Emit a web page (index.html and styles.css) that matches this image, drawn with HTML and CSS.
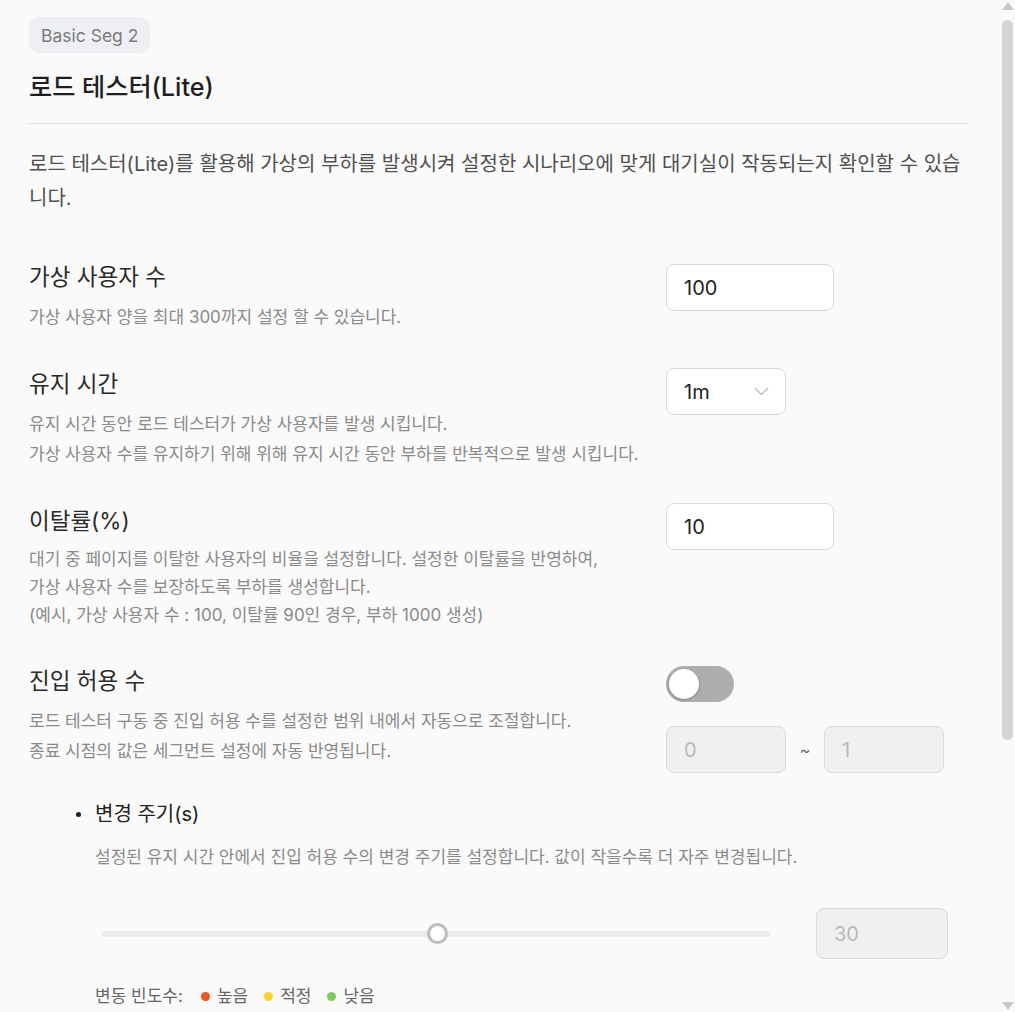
FILE: index.html
```html
<!DOCTYPE html>
<html lang="ko">
<head>
<meta charset="utf-8">
<title>로드 테스터(Lite)</title>
<link rel="stylesheet" href="styles.css">
</head>
<body>
<main class="page">
  <span class="badge">Basic Seg 2</span>
  <h1 class="title">로드 테스터(Lite)</h1>
  <hr class="divider">
  <p class="intro">로드 테스터(Lite)를 활용해 가상의 부하를 발생시켜 설정한 시나리오에 맞게 대기실이 작동되는지 확인할 수 있습니다.</p>

  <section class="rows">
    <div class="row">
      <div class="info">
        <h2 class="label">가상 사용자 수</h2>
        <p class="desc">가상 사용자 양을 최대 300까지 설정 할 수 있습니다.</p>
      </div>
      <div class="control">
        <div class="field field-wide">100</div>
      </div>
    </div>

    <div class="row">
      <div class="info">
        <h2 class="label">유지 시간</h2>
        <p class="desc">유지 시간 동안 로드 테스터가 가상 사용자를 발생 시킵니다.<br>가상 사용자 수를 유지하기 위해 위해 유지 시간 동안 부하를 반복적으로 발생 시킵니다.</p>
      </div>
      <div class="control control-r2">
        <div class="field field-select">
          <span>1m</span>
          <svg class="chevron" width="15" height="9" viewBox="0 0 15 9"><path d="M1 1 L7.5 7.5 L14 1" fill="none" stroke="#bdbdbd" stroke-width="1.3"/></svg>
        </div>
      </div>
    </div>

    <div class="row">
      <div class="info">
        <h2 class="label">이탈률(%)</h2>
        <p class="desc desc-tight">대기 중 페이지를 이탈한 사용자의 비율을 설정합니다. 설정한 이탈률을 반영하여,<br>가상 사용자 수를 보장하도록 부하를 생성합니다.<br>(예시, 가상 사용자 수 : 100, 이탈률 90인 경우, 부하 1000 생성)</p>
      </div>
      <div class="control control-r3">
        <div class="field field-wide">10</div>
      </div>
    </div>

    <div class="row">
      <div class="info">
        <h2 class="label">진입 허용 수</h2>
        <p class="desc">로드 테스터 구동 중 진입 허용 수를 설정한 범위 내에서 자동으로 조절합니다.<br>종료 시점의 값은 세그먼트 설정에 자동 반영됩니다.</p>
      </div>
      <div class="control control-stack">
        <div class="toggle"><span class="knob"></span></div>
        <div class="range">
          <div class="field field-disabled">0</div>
          <span class="tilde">~</span>
          <div class="field field-disabled">1</div>
        </div>
      </div>
    </div>
  </section>

  <section class="sub">
    <div class="sub-head"><span class="dot-bullet"></span><h3 class="sub-label">변경 주기(s)</h3></div>
    <p class="sub-desc">설정된 유지 시간 안에서 진입 허용 수의 변경 주기를 설정합니다. 값이 작을수록 더 자주 변경됩니다.</p>
    <div class="slider-row">
      <div class="slider">
        <div class="track">
          <span class="thumb"></span>
        </div>
      </div>
      <div class="field field-disabled field-num">30</div>
    </div>
    <div class="legend">
      <span class="legend-title">변동 빈도수:</span>
      <span class="legend-item"><span class="ldot ldot-high"></span>높음</span>
      <span class="legend-item"><span class="ldot ldot-mid"></span>적정</span>
      <span class="legend-item"><span class="ldot ldot-low"></span>낮음</span>
    </div>
  </section>
</main>
<div class="scrollbar" aria-hidden="true">
  <span class="sb-arrow sb-up"></span>
  <span class="sb-thumb"></span>
  <span class="sb-arrow sb-down"></span>
</div>
</body>
</html>
```

FILE: styles.css
```css
* { box-sizing: border-box; }
html, body { margin: 0; padding: 0; }
html { scrollbar-width: none; }
body {
  background: #fafafa;
  font-family: Inter, "Noto Sans CJK KR", sans-serif;
  color: #222;
}
.page {
  padding: 17px 48px 380px 29px;
  display: flex;
  flex-direction: column;
  align-items: flex-start;
}
.badge {
  display: inline-flex;
  align-items: center;
  height: 36px;
  padding: 0 12px;
  background: #eeeff3;
  border-radius: 10px;
  font-size: 17.5px;
  color: #7b7b7b;
}
.title {
  margin: 18px 0 0;
  font-size: 25.2px;
  line-height: 32px;
  font-weight: 500;
  color: #1f1f1f;
}
.divider {
  align-self: stretch;
  border: 0;
  border-top: 1px solid #dcdcdc;
  margin: 20px 0 0;
}
.intro {
  margin: 23px 0 0;
  font-size: 20px;
  line-height: 34px;
  color: #505050;
}
.rows {
  align-self: stretch;
  margin-top: 47px;
  display: flex;
  flex-direction: column;
  gap: 37px;
}
.row {
  display: grid;
  grid-template-columns: 637px 1fr;
}
.label {
  margin: 0;
  font-size: 22.5px;
  line-height: 30px;
  font-weight: 400;
  color: #2a2a2a;
}
.desc {
  margin: 10px 0 0;
  font-size: 17px;
  line-height: 30px;
  color: #8a8a8a;
}
.desc-tight { line-height: 28px; margin-top: 9px; }
.control { padding-top: 2px; }
.control-r2 { padding-top: 0; margin-top: -1px; }
.control-r3 { padding-top: 0; margin-top: -3px; }
.control-stack {
  padding-top: 0;
  display: flex;
  flex-direction: column;
  gap: 24px;
}
.field {
  height: 47px;
  border: 1px solid #dadada;
  border-radius: 8px;
  background: #fff;
  font-size: 20px;
  color: #222;
  display: flex;
  align-items: center;
  padding: 0 17px;
}
.field-wide { width: 168px; }
.field-select {
  width: 120px;
  justify-content: space-between;
  padding-right: 16px;
}
.chevron { display: block; }
.field-disabled {
  width: 120px;
  background: #f0f0f0;
  color: #b9b9b9;
}
.range {
  display: flex;
  align-items: center;
}
.tilde {
  width: 38px;
  text-align: center;
  color: #666;
  font-size: 16px;
}
.toggle {
  width: 68px;
  height: 36px;
  border-radius: 18px;
  background: #adaeb0;
  display: flex;
  align-items: center;
  padding-left: 3px;
}
.knob {
  width: 30px;
  height: 30px;
  border-radius: 50%;
  background: #fff;
  box-shadow: 0 1px 3px rgba(0,0,0,0.25);
}
.sub {
  align-self: stretch;
  margin-top: 27px;
  padding-left: 47px;
}
.sub-head {
  display: flex;
  align-items: center;
  gap: 14px;
}
.dot-bullet {
  width: 5px;
  height: 5px;
  border-radius: 50%;
  background: #222;
}
.sub-label {
  margin: 0;
  font-size: 20px;
  line-height: 28px;
  font-weight: 400;
  color: #222;
}
.sub-desc {
  margin: 14px 0 0 19px;
  font-size: 17px;
  line-height: 30px;
  color: #8a8a8a;
}
.slider-row {
  margin: 36px 0 0 19px;
  width: 853px;
  display: flex;
  align-items: center;
  gap: 46px;
}
.slider {
  flex: 1;
  padding-left: 7px;
}
.track {
  height: 6px;
  border-radius: 3px;
  background: #ebebeb;
  display: flex;
  align-items: center;
  padding-left: 325px;
}
.thumb {
  width: 21px;
  height: 21px;
  border-radius: 50%;
  background: #fff;
  border: 3px solid #bdbdbd;
}
.field-num {
  width: 132px;
  height: 51px;
  font-size: 20px;
}
.legend {
  margin: 25px 0 0 19px;
  display: flex;
  align-items: center;
  font-size: 17px;
  line-height: 24px;
  color: #666;
}
.legend-title { margin-right: 18px; }
.legend-item {
  display: inline-flex;
  align-items: center;
  gap: 7px;
  margin-right: 16px;
}
.ldot {
  width: 9px;
  height: 9px;
  border-radius: 50%;
}
.ldot-high { background: #f05522; }
.ldot-mid { background: #f8d42a; }
.ldot-low { background: #7ccb5a; }

.scrollbar {
  position: fixed;
  top: 0;
  right: 0;
  width: 15px;
  height: 100vh;
  background: #fafafa;
  display: flex;
  flex-direction: column;
  align-items: center;
}
.sb-arrow {
  width: 0;
  height: 0;
  border-left: 6px solid transparent;
  border-right: 6px solid transparent;
}
.sb-up {
  margin-top: 2px;
  border-bottom: 8px solid #c9c9c9;
}
.sb-thumb {
  margin-top: 10px;
  width: 11px;
  height: 720px;
  border-radius: 6px;
  background: #d4d5d9;
}
.sb-down {
  margin-top: auto;
  margin-bottom: 2px;
  border-top: 8px solid #c9c9c9;
}
```
